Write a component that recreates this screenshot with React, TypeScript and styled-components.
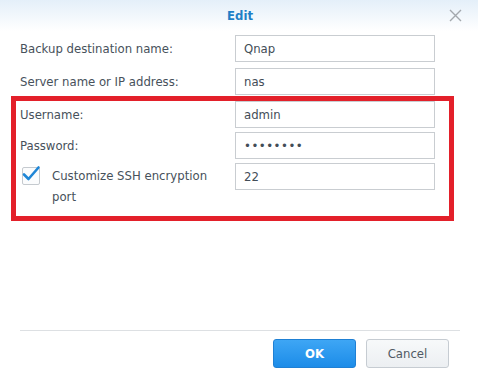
import React from "react";
import styled, { createGlobalStyle } from "styled-components";

const GlobalStyle = createGlobalStyle`
  html, body {
    margin: 0;
    padding: 0;
    background: #ffffff;
  }
  body {
    font-family: "DejaVu Sans Condensed", "DejaVu Sans", Verdana, sans-serif;
    font-stretch: condensed;
  }
`;

type Field = { label: string; value: string };

const topFields: Field[] = [
  { label: "Backup destination name:", value: "Qnap" },
  { label: "Server name or IP address:", value: "nas" },
];

const App = () => {
  return (
    <>
      <GlobalStyle />
      <StyledDialog>
        <StyledHeader>
          <StyledTitle>Edit</StyledTitle>
          <StyledClose aria-label="close">
            <svg width="13" height="13" viewBox="0 0 13 13">
              <path d="M1 1 L12 12 M12 1 L1 12" stroke="#a3a8ad" strokeWidth="1.4" />
            </svg>
          </StyledClose>
        </StyledHeader>

        <StyledForm>
          {topFields.map((f) => (
            <StyledRow key={f.label}>
              <StyledLabel>{f.label}</StyledLabel>
              <StyledInput defaultValue={f.value} />
            </StyledRow>
          ))}

          <StyledHighlight>
            <StyledRow>
              <StyledLabel>Username:</StyledLabel>
              <StyledInput defaultValue="admin" />
            </StyledRow>
            <StyledRow>
              <StyledLabel>Password:</StyledLabel>
              <StyledInput defaultValue="••••••••" dots />
            </StyledRow>
            <StyledRow $top>
              <StyledCheckLabel>
                <StyledCheckbox>
                  <svg width="20" height="18" viewBox="0 0 20 18">
                    <path
                      d="M3 9.5 L7.5 14 L17.5 2.5"
                      fill="none"
                      stroke="#1f86d6"
                      strokeWidth="2.6"
                      strokeLinecap="round"
                      strokeLinejoin="round"
                    />
                  </svg>
                </StyledCheckbox>
                <StyledWrapText>Customize SSH encryption port</StyledWrapText>
              </StyledCheckLabel>
              <StyledInput defaultValue="22" />
            </StyledRow>
          </StyledHighlight>
        </StyledForm>

        <StyledFooter>
          <StyledButton $primary>OK</StyledButton>
          <StyledButton>Cancel</StyledButton>
        </StyledFooter>
      </StyledDialog>
    </>
  );
};

const StyledDialog = styled.div`
  width: 478px;
  height: 374px;
  display: flex;
  flex-direction: column;
  background: #ffffff;
  color: #47515b;
  font-size: 13px;
`;

const StyledHeader = styled.div`
  position: relative;
  height: 31px;
  display: flex;
  align-items: center;
  justify-content: center;
  background: linear-gradient(#e4eff9, #ffffff);
`;

const StyledTitle = styled.span`
  font-weight: bold;
  font-size: 13px;
  color: #1f7fc6;
  margin-left: 2px;
`;

const StyledClose = styled.span`
  position: absolute;
  right: 16px;
  top: 9px;
  display: flex;
  cursor: pointer;
`;

const StyledForm = styled.div`
  display: flex;
  flex-direction: column;
  gap: 6px;
  padding: 4px 43px 0 20px;
`;

const StyledRow = styled.div<{ $top?: boolean }>`
  display: flex;
  align-items: ${(p) => (p.$top ? "flex-start" : "center")};
  min-height: 27px;
`;

const StyledLabel = styled.span`
  width: 215px;
  flex: none;
  white-space: nowrap;
`;

const StyledInput = styled.input.attrs({ readOnly: true })<{ dots?: boolean }>`
  box-sizing: border-box;
  width: 200px;
  height: 27px;
  padding: 0 8px;
  border: 1px solid #c9cdd1;
  border-radius: 0;
  font-family: inherit;
  font-stretch: condensed;
  font-size: 13px;
  color: #434d57;
  letter-spacing: ${(p) => (p.dots ? "0.5px" : "normal")};
  outline: none;
`;

const StyledHighlight = styled.div`
  display: flex;
  flex-direction: column;
  gap: 4px;
  margin: -5px -19px 0 -9px;
  padding: 0 14px 9px 4px;
  border: 5px solid #e3202a;
`;

const StyledCheckLabel = styled.div`
  width: 215px;
  flex: none;
  display: flex;
  align-items: flex-start;
  gap: 12px;
  padding-left: 2px;
  box-sizing: border-box;
`;

const StyledCheckbox = styled.span`
  position: relative;
  flex: none;
  width: 16px;
  height: 16px;
  margin-top: 4px;
  border: 1px solid #c5cacf;
  border-radius: 2px;
  background: #fbfcfd;
  svg {
    position: absolute;
    left: -2px;
    top: -3px;
  }
`;

const StyledWrapText = styled.span`
  width: 172px;
  line-height: 21px;
  padding-top: 2px;
`;

const StyledFooter = styled.div`
  margin: auto 18px 6px 20px;
  padding: 8px 11px 0 0;
  border-top: 1px solid #dde0e3;
  display: flex;
  justify-content: flex-end;
  gap: 10px;
`;

const StyledButton = styled.button<{ $primary?: boolean }>`
  width: 83px;
  height: 29px;
  border-radius: 3px;
  font-family: inherit;
  font-stretch: condensed;
  font-size: 13px;
  cursor: pointer;
  border: 1px solid ${(p) => (p.$primary ? "#1f80d4" : "#c6ccd2")};
  background: ${(p) =>
    p.$primary
      ? "linear-gradient(#3ea6f5, #1c8ce8)"
      : "linear-gradient(#f7f9fa, #eceff2)"};
  color: ${(p) => (p.$primary ? "#ffffff" : "#505a64")};
  font-weight: ${(p) => (p.$primary ? "bold" : "normal")};
`;

export default App;
